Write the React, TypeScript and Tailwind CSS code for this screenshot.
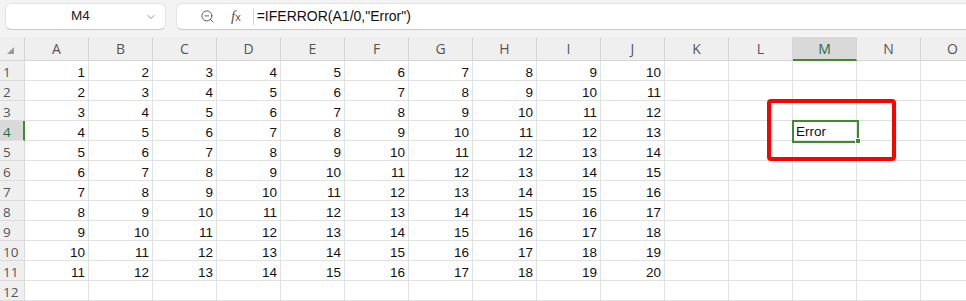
import React from "react";
import { ZoomOut, ChevronDown } from "lucide-react";

const COLS = ["A", "B", "C", "D", "E", "F", "G", "H", "I", "J", "K", "L", "M", "N", "O"];
const ROWS = Array.from({ length: 12 }, (_, i) => i + 1);

export default function App() {
  return (
    <div className="w-[966px] h-[301px] overflow-hidden bg-[#f3f3f3] relative" style={{ fontFamily: '"Liberation Sans", Arial, sans-serif' }}>
      {/* Top bar */}
      <div className="h-[30px] flex items-end pl-[5px] gap-[10px]">
        <div className="w-[161px] h-[27px] bg-white rounded-[6px] border border-[#e3e3e3] border-b-[#c9c9c9] flex items-center relative">
          <span className="flex-1 text-center text-[13.5px] text-[#222] pr-[10px]">M4</span>
          <ChevronDown className="absolute right-[8px] top-[7px] w-[12px] h-[12px] text-[#777]" strokeWidth={1.5} />
        </div>
        <div className="flex-1 h-[27px] bg-white rounded-l-[6px] border border-r-0 border-[#e3e3e3] border-b-[#c9c9c9] flex items-center">
          <ZoomOut className="ml-[23px] w-[15px] h-[15px] text-[#555]" strokeWidth={1.5} />
          <span className="ml-[16px] text-[15px] text-[#555] italic" style={{ fontFamily: '"Liberation Serif", serif' }}>
            f<span className="text-[11px] not-italic" style={{ fontFamily: '"Liberation Sans", sans-serif' }}>x</span>
          </span>
          <div className="ml-[12px] w-px h-[16px] bg-[#d0d0d0]" />
          <span className="ml-[3px] text-[14px] text-[#111]">=IFERROR(A1/0,"Error")</span>
        </div>
      </div>
      <div className="h-[7px]" />
      {/* Grid */}
      <div className="grid grid-cols-[25px_repeat(15,64px)]" style={{ fontFamily: '"Liberation Sans", Arial, sans-serif' }}>
        {/* header row */}
        <div className="h-[24px] bg-[#efefef] border-r border-b border-[#d6d6d6] flex items-center justify-center">
          <svg width="7" height="7" viewBox="0 0 7 7" className="mt-[4px] ml-[-4px]">
            <polygon points="7,0 7,7 0,7" fill="#9a9a9a" />
          </svg>
        </div>
        {COLS.map((c) => (
          <div
            key={c}
            className={
              c === "M"
                ? "h-[24px] bg-[#d9d9d9] border-r border-[#d6d6d6] border-b-2 border-b-[#3f8a2f] flex items-center justify-center text-[14px] text-[#1f6f3c]"
                : "h-[24px] bg-[#efefef] border-r border-b border-[#d6d6d6] flex items-center justify-center text-[14px] text-[#555]"
            }
            style={{ fontFamily: '"Open Sans", sans-serif' }}
          >
            {c}
          </div>
        ))}
        {ROWS.map((r) => (
          <React.Fragment key={r}>
            <div
              className={
                r === 4
                  ? "h-[20px] bg-[#d9d9d9] border-r-2 border-r-[#3f8a2f] border-b border-b-[#dedede] pl-[3px] text-[13.5px] leading-[22px] text-[#1f6f3c]"
                  : "h-[20px] bg-[#efefef] border-r border-b border-[#dadada] pl-[3px] text-[13.5px] leading-[22px] text-[#555]"
              }
              style={{ fontFamily: '"Open Sans", sans-serif' }}
            >
              {r}
            </div>
            {COLS.map((c, ci) => {
              const val = r <= 11 && ci < 10 ? String(r + ci) : "";
              const isSel = r === 4 && c === "M";
              return (
                <div
                  key={c}
                  className="h-[20px] bg-white border-r border-b border-[#e1e1e1] relative text-[13.5px] leading-[24px] text-[#111] text-right pr-[3px]"
                >
                  {val}
                  {isSel && (
                    <div className="absolute left-[-1px] top-[-1px] w-[67px] h-[23px] border-2 border-[#3f8a2f] text-left pl-[2px] leading-[20px] z-10">
                      Error
                      <div className="absolute right-[-4px] bottom-[-3px] w-[6px] h-[6px] bg-[#3f8a2f] border border-white" />
                    </div>
                  )}
                </div>
              );
            })}
          </React.Fragment>
        ))}
      </div>
      {/* Red highlight box */}
      <div className="absolute left-[767px] top-[99px] w-[129px] h-[62px] border-[4px] border-[#ff0000] rounded-[4px] z-20" />
    </div>
  );
}
